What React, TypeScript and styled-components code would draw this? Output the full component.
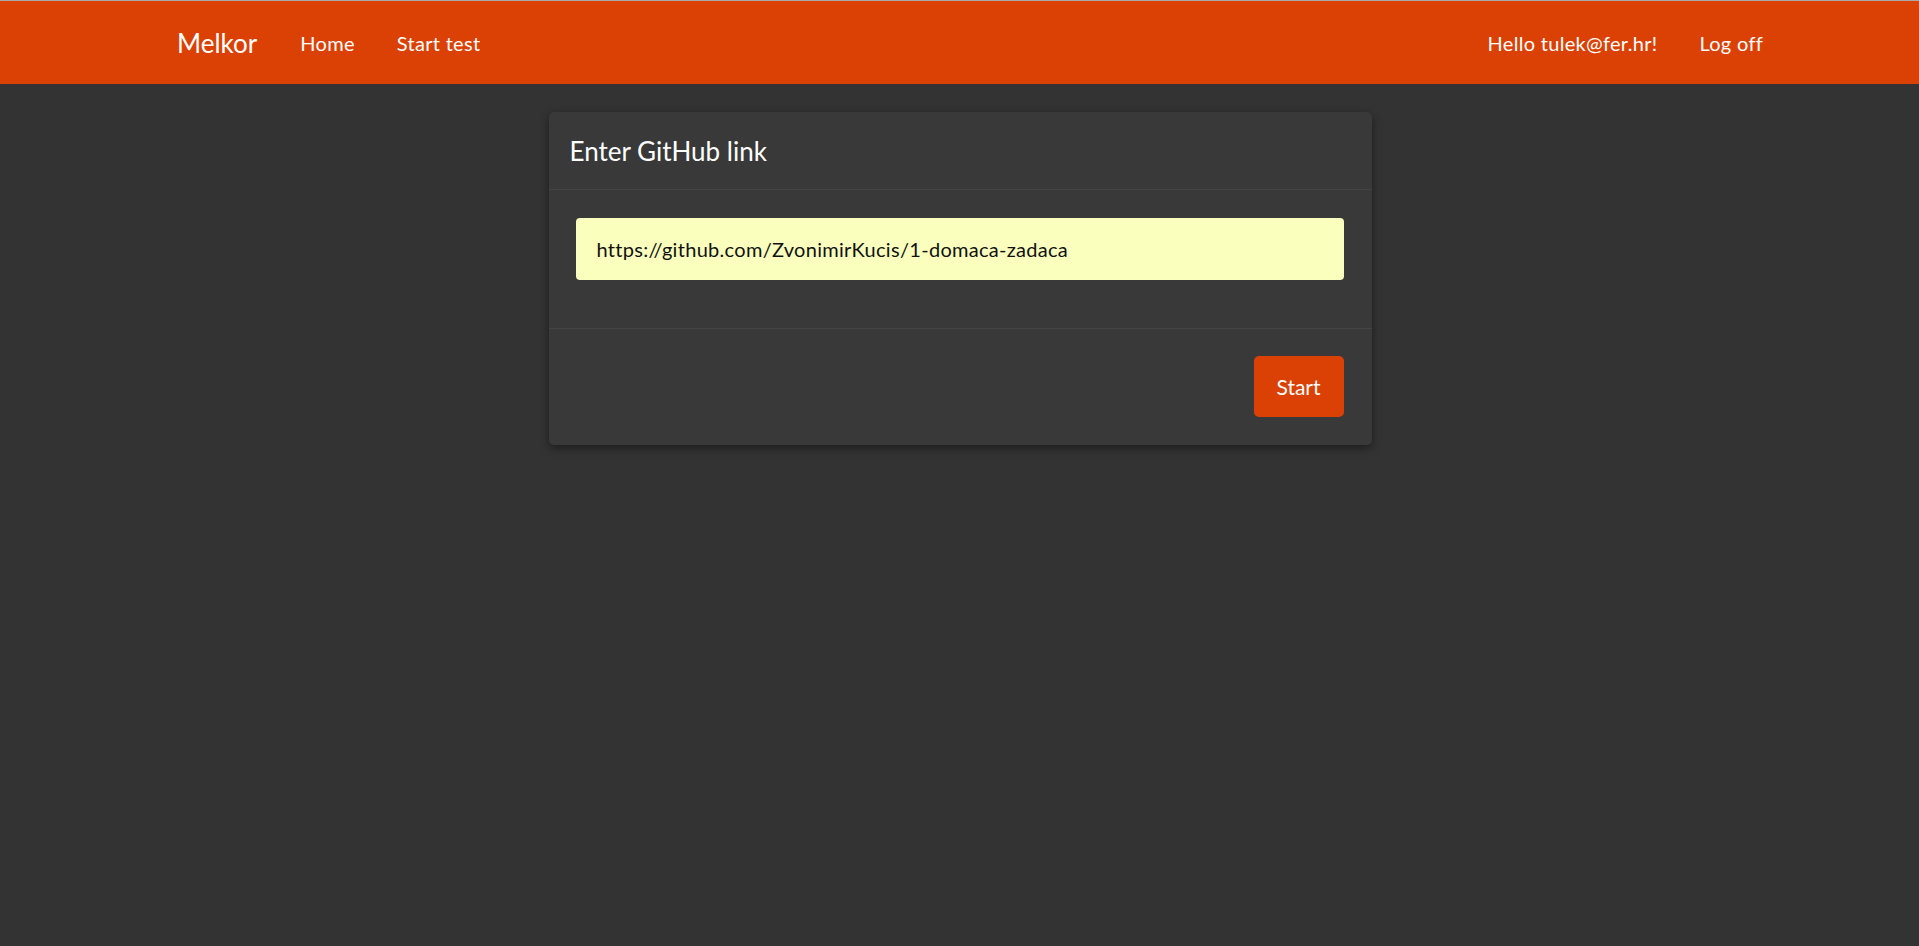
import React from "react";
import styled, { createGlobalStyle } from "styled-components";

const GlobalStyle = createGlobalStyle`
  html, body {
    margin: 0;
    padding: 0;
    background: #333333;
    font-family: Lato, "Open Sans", "Liberation Sans", sans-serif;
    color: #ffffff;
  }
  * { box-sizing: border-box; }
`;

const Page = styled.div`
  min-height: 946px;
  background: #333333;
  border-top: 1px solid #a9a9a9;
`;

const NavBar = styled.nav`
  height: 83px;
  background: #db4104;
  display: flex;
  align-items: center;
  justify-content: space-between;
  padding: 0 135px 0 177px;
`;

const NavGroup = styled.div`
  display: flex;
  align-items: center;
`;

const Brand = styled.a`
  font-size: 26px;
  color: #ffffff;
  margin-right: 22px;
  text-decoration: none;
`;

const NavLink = styled.a`
  font-size: 20px;
  letter-spacing: 0.3px;
  color: #ffffff;
  padding: 0 21px;
  text-decoration: none;
`;

const Main = styled.main`
  display: flex;
  justify-content: center;
  padding-top: 28px;
`;

const Card = styled.section`
  width: 823px;
  margin-left: 1px;
  background: #393939;
  border-radius: 5px;
  box-shadow: 0 3px 10px rgba(0, 0, 0, 0.45);
  overflow: hidden;
`;

const CardHeader = styled.header`
  height: 78px;
  padding: 0 21px;
  display: flex;
  align-items: center;
  border-bottom: 1px solid #444444;
`;

const Title = styled.h2`
  margin: 0;
  font-size: 26px;
  font-weight: 400;
  color: #ffffff;
`;

const CardBody = styled.div`
  padding: 28px 28px 48px 27px;
  border-bottom: 1px solid #444444;
`;

const LinkInput = styled.input`
  display: block;
  width: 100%;
  height: 62px;
  padding: 0 21px;
  border: none;
  border-radius: 4px;
  background: #faffbd;
  color: #111111;
  font-family: Lato, "Open Sans", "Liberation Sans", sans-serif;
  font-size: 20px;
  letter-spacing: 0.3px;
  outline: none;
  caret-color: #000000;
`;

const CardFooter = styled.footer`
  display: flex;
  justify-content: flex-end;
  padding: 27px 28px 28px;
`;

const StartButton = styled.button`
  width: 90px;
  height: 61px;
  border: none;
  border-radius: 5px;
  background: #db4104;
  color: #ffffff;
  font-family: Lato, "Open Sans", "Liberation Sans", sans-serif;
  font-size: 21px;
  cursor: pointer;
`;

export default function App() {
  return (
    <>
      <GlobalStyle />
      <Page>
        <NavBar>
          <NavGroup>
            <Brand href="#">Melkor</Brand>
            <NavLink href="#">Home</NavLink>
            <NavLink href="#">Start test</NavLink>
          </NavGroup>
          <NavGroup>
            <NavLink href="#">Hello tulek@fer.hr!</NavLink>
            <NavLink href="#">Log off</NavLink>
          </NavGroup>
        </NavBar>
        <Main>
          <Card>
            <CardHeader>
              <Title>Enter GitHub link</Title>
            </CardHeader>
            <CardBody>
              <LinkInput
                type="text"
                defaultValue="https://github.com/ZvonimirKucis/1-domaca-zadaca"
                autoFocus
              />
            </CardBody>
            <CardFooter>
              <StartButton>Start</StartButton>
            </CardFooter>
          </Card>
        </Main>
      </Page>
    </>
  );
}
